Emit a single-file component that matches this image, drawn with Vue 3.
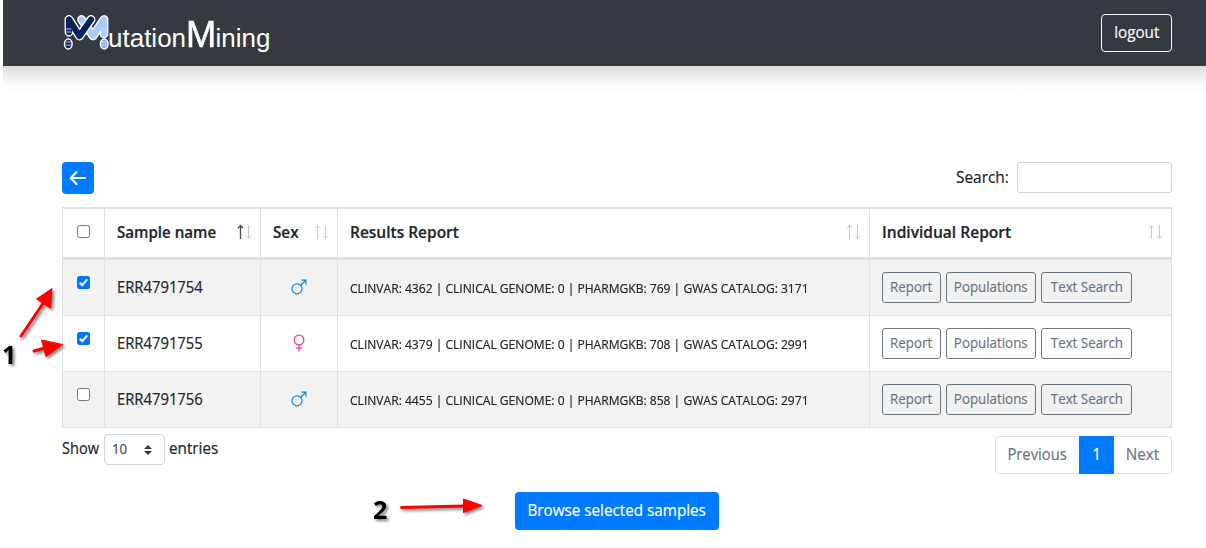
<script setup>
import { ref } from 'vue'

const samples = ref([
  { name: 'ERR4791754', sex: 'male', on: true, report: 'CLINVAR: 4362 | CLINICAL GENOME: 0 | PHARMGKB: 769 | GWAS CATALOG: 3171' },
  { name: 'ERR4791755', sex: 'female', on: true, report: 'CLINVAR: 4379 | CLINICAL GENOME: 0 | PHARMGKB: 708 | GWAS CATALOG: 2991' },
  { name: 'ERR4791756', sex: 'male', on: false, report: 'CLINVAR: 4455 | CLINICAL GENOME: 0 | PHARMGKB: 858 | GWAS CATALOG: 2971' },
])
const columns = [
  { label: 'Sample name', key: 'name', sorted: true },
  { label: 'Sex', key: 'gender' },
  { label: 'Results Report', key: 'results' },
  { label: 'Individual Report', key: 'individual' },
]
</script>

<template>
  <div class="page">
    <div class="top">
      <header class="bar">
        <div class="brand">
          <svg class="mark" width="46" height="38" viewBox="0 0 46 38" fill="none" stroke-linecap="round" stroke-linejoin="round">
            <g stroke="#fff" stroke-width="8.800">
              <path d="M18.500 5.500 L30 22 L41 5.500 V20" />
              <path d="M6 5.500 L16.500 22 L28 5.500 M6 5.500 V18" />
            </g>
            <ellipse cx="5.300" cy="30" rx="3.800" ry="5" fill="#0a2458" stroke="#fff" stroke-width="1.500" />
            <ellipse cx="41.200" cy="30" rx="3.800" ry="5" fill="#8faee4" stroke="#fff" stroke-width="1.500" />
            <path d="M18.500 5.500 L30 22 L41 5.500 V20" stroke="#a9cbfb" stroke-width="6.200" />
            <path d="M6 5.500 L16.500 22 L28 5.500" stroke="#fff" stroke-width="8.400" />
            <path d="M6 5.500 V18 M6 5.500 L16.500 22 L28 5.500" stroke="#04245a" stroke-width="6.200" />
            <path d="M3 15h5M3 18h5M4 22h3M3.500 28h4M3.500 31h4M39 15h4M39 18h4M39 28h4M39 31h4" stroke="#d2def5" stroke-width=".9" />
          </svg>
          <span class="word">utation<b>M</b>ining</span>
        </div>
        <button class="logout"><span class="t">logout</span></button>
      </header>
      <div class="fade"></div>
    </div>

    <main>
      <div class="tools">
        <button class="back" aria-label="Back">
          <svg width="18" height="16" viewBox="0 0 18 16" fill="none" stroke="#fff" stroke-width="2" stroke-linecap="round" stroke-linejoin="round"><path d="M16 8H2M7.500 2 1.700 8l5.800 6" /></svg>
        </button>
        <label class="search"><span class="t find">Search:</span><input type="text" /></label>
      </div>

      <table>
        <colgroup><col class="c1" /><col class="c2" /><col class="c3" /><col class="c4" /><col class="c5" /></colgroup>
        <thead>
          <tr>
            <th><span class="check"></span></th>
            <th v-for="c in columns" :key="c.key">
              <div class="head">
                <span class="t" :class="c.key">{{ c.label }}</span>
                <svg width="16" height="16" viewBox="0 0 16 16" fill="none" stroke="#c8c9ca">
                  <path d="M4.500 15V1.500M2 4.200 4.500 1.500 7 4.200" :class="{ active: c.sorted }" />
                  <path d="M12.500 1V14.500M10 11.800l2.500 2.700 2.500-2.700" />
                </svg>
              </div>
            </th>
          </tr>
        </thead>
        <tbody>
          <tr v-for="s in samples" :key="s.name">
            <td class="pick">
              <span class="check" :class="{ on: s.on }" @click="s.on = !s.on">
                <svg v-if="s.on" width="13" height="13" viewBox="0 0 13 13" fill="none" stroke="#fff" stroke-width="2"><path d="M2.800 6.800 5.300 9.200 10.200 3.400" /></svg>
              </span>
            </td>
            <td><span class="t code">{{ s.name }}</span></td>
            <td class="sex">
              <svg v-if="s.sex === 'male'" width="16" height="16" viewBox="0 0 16 16" fill="none" stroke="#1184f5" stroke-width="1.200"><circle cx="6" cy="9.800" r="5" /><path d="M9.600 6.300 14.800 1.200M10.300 1.100h4.600v4.600" /></svg>
              <svg v-else width="16" height="18" viewBox="0 0 16 18" fill="none" stroke="#e83e8c" stroke-width="1.200"><circle cx="8" cy="6" r="4.900" /><path d="M8 10.900V17.500M4.800 14.200h6.400" /></svg>
            </td>
            <td><span class="t results-line">{{ s.report }}</span></td>
            <td>
              <div class="actions">
                <button class="b1"><span class="t">Report</span></button>
                <button class="b2"><span class="t">Populations</span></button>
                <button class="b3"><span class="t">Text Search</span></button>
              </div>
            </td>
          </tr>
        </tbody>
      </table>

      <div class="foot">
        <div class="length">
          <span class="t show">Show</span>
          <span class="select"><span class="t ten">10</span><svg width="8" height="10" viewBox="0 0 8 10" fill="#343a40"><path d="M0 4 4 0l4 4zM0 6h8L4 10z" /></svg></span>
          <span class="t entries">entries</span>
        </div>
        <nav>
          <span class="prev"><span class="t">Previous</span></span>
          <span class="cur"><span class="t">1</span></span>
          <span class="next"><span class="t">Next</span></span>
        </nav>
      </div>

      <div class="submit"><button><span class="t">Browse selected samples</span></button></div>
    </main>

    <svg class="notes" width="1206" height="548" viewBox="0 0 1206 548">
      <g class="shade">
        <g stroke="#f00" stroke-width="3" stroke-linecap="round">
          <path d="M21 336 44 302M34 351 45 348M401.500 507.500 466 506" />
        </g>
        <g fill="#f00" stroke="#f00" stroke-linejoin="round">
          <path d="M52 288.500 50.500 308 36.500 299z" />
          <path d="M62.500 344.500 41.500 340 46 356.500z" />
          <path d="M482 505.500 463.500 499 463.500 512.500z" />
        </g>
        <text x="2" y="364">1</text>
        <text x="373" y="519">2</text>
      </g>
    </svg>
  </div>
</template>

<style>
body { margin: 0; background: #fff; }
</style>

<style scoped>
* { box-sizing: border-box; }
.page { position: relative; width: 1206px; height: 548px; overflow: hidden; background: #fff; color: #212529; font: 16px/24px "Trebuchet MS", "Open Sans", "Noto Sans", sans-serif; }
button { font: inherit; cursor: pointer; padding: 0; display: flex; align-items: center; justify-content: center; }
.t { white-space: nowrap; display: inline-block; transform: translateY(-1px) scaleX(.952); -webkit-text-stroke: .2px currentColor; }
.top { margin-left: 3px; height: 100px; }
.bar { height: 66px; background: #343a40; padding: 0 34px 0 60px; display: flex; justify-content: space-between; align-items: center; }
.fade { height: 26px; background: linear-gradient(#dcdcdc, #ececec 35%, #fafafa 72%, #fff); }
.brand { display: flex; align-items: flex-start; height: 66px; padding-top: 13px; color: #fff; }
.mark { margin-top: 1px; }
.word { font: 26px/38px "Liberation Sans", Arial, sans-serif; margin: 6px 0 0 -1px; white-space: nowrap; }
.word b { display: inline-block; width: 29.5px; font-weight: 400; font-size: 37px; line-height: 30px; transform: scaleX(.98); transform-origin: left; -webkit-text-stroke: .5px #fff; }
.logout { width: 71px; height: 38px; border: 1px solid #f8f9fa; border-radius: 4px; background: none; color: #f8f9fa; }
main { width: 1110px; margin-left: 62px; padding-top: 62px; }
.tools { display: flex; justify-content: space-between; height: 45px; }
.back { width: 32px; height: 32px; border: 0; border-radius: 4px; background: #007bff; }
.search { display: flex; gap: 8px; line-height: 32px; height: 31px; }
.find { transform: translateY(-1px) scaleX(.965); transform-origin: right; }
.search input { width: 155px; height: 31px; border: 1px solid #ced4da; border-radius: 3px; }
table { width: 1110px; table-layout: fixed; border-collapse: separate; border-spacing: 0; border-left: 1px solid #dee2e6; border-top: 2px solid #dee2e6; }
.c1 { width: 42px; } .c2 { width: 156px; } .c3 { width: 77px; } .c4 { width: 532px; } .c5 { width: 302px; }
th, td { padding: 0 12px; border-right: 1px solid #dee2e6; border-bottom: 1px solid #dee2e6; text-align: left; vertical-align: middle; }
th { height: 51px; border-bottom-width: 3px; font-weight: 600; padding-right: 8px; }
td { height: 56px; }
tbody tr:nth-child(odd) { background: #f2f2f2; }
.head { display: flex; justify-content: space-between; align-items: center; }
.head svg { margin-top: -2px; }
.head .active { stroke: #55453f; stroke-width: 1.3; }
.head .t, .code, .results-line, .show, .entries, .ten { transform-origin: left; }
.head .name { transform: translateY(-1px) scaleX(.943); }
.head .results { transform: translateY(-1px) scaleX(.968); }
.head .individual { transform: translateY(-1px) scaleX(.972); }
.code { transform: translateY(-1px) scaleX(.925); }
.results-line { font-size: 12.8px; transform: scaleX(.943); }
th:first-child, .pick { padding: 0 0 0 14px; }
.check { display: block; width: 13px; height: 13px; border: 1px solid #767676; border-radius: 2.5px; background: #fff; margin-top: -4px; }
.pick .check { margin-top: -11px; }
.check.on { border: 0; background: #0075ff; }
.check svg { display: block; }
.sex { padding: 0; text-align: center; }
.sex svg { display: block; margin: -2px auto 0; }
.actions { display: flex; gap: 5px; font-size: 14px; }
.actions button { height: 31px; border: 1px solid #6c757d; border-radius: 3px; color: #6c757d; background: none; }
.b1 { width: 59px; } .b2 { width: 90px; } .b3 { width: 91px; }
.foot { display: flex; justify-content: space-between; height: 64px; }
.length { display: flex; padding-top: 6px; height: 37px; line-height: 30px; }
.show { width: 42px; transform: translateY(-1px) scaleX(.91); }
.select { width: 61px; height: 31px; border: 1px solid #ced4da; border-radius: 4px; padding: 0 12px 0 7px; display: flex; align-items: center; justify-content: space-between; color: #495057; font-size: 14px; margin-right: 4px; }
nav { display: flex; margin-top: 8px; height: 38px; color: #6c757d; border: 1px solid #dee2e6; border-radius: 4px; width: 177px; }
nav > span { display: flex; align-items: center; justify-content: center; flex: none; }
.prev { width: 83px; } .next { width: 57px; }
.prev .t { transform: translateY(-1px) scaleX(.925); }
.cur { width: 35px; background: #007bff; color: #fff; margin: -1px 0; }
.submit { display: flex; padding-left: 453px; }
.submit button { width: 204px; height: 38px; background: #007bff; border: 0; border-radius: 4px; color: #fff; }
.notes { position: absolute; left: 0; top: 0; pointer-events: none; }
.notes text { font: 700 25px "Open Sans", "Noto Sans", sans-serif; }
.shade { filter: drop-shadow(2px 2px 1.5px rgba(0, 0, 0, .5)); }
</style>
